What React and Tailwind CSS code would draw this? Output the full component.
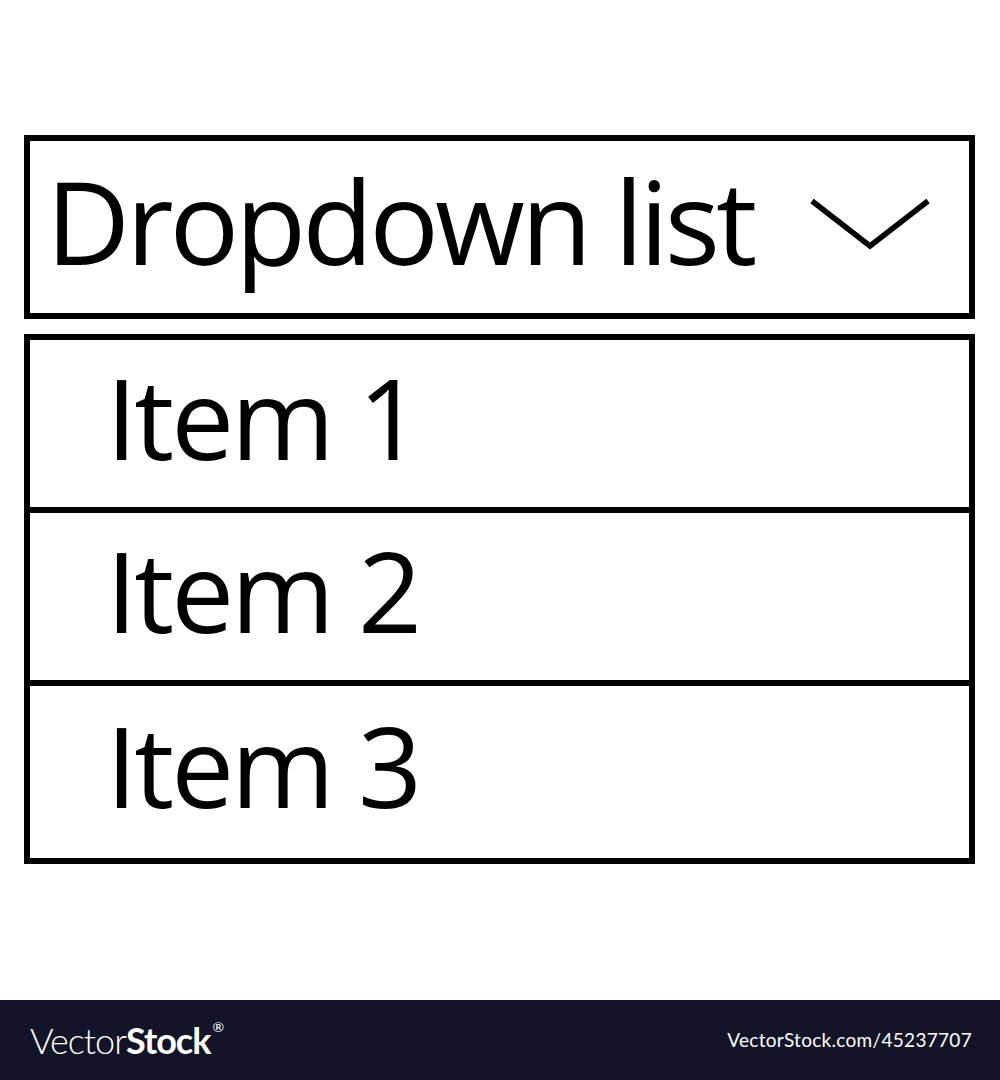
import React from 'react';

const items = ['Item 1', 'Item 2', 'Item 3'];

function Chevron() {
  return (
    <svg width="124" height="60" viewBox="0 0 124 60" className="shrink-0">
      <polyline
        points="4,4 62,49 120,4"
        fill="none"
        stroke="#000"
        strokeWidth="5.5"
      />
    </svg>
  );
}

function App() {
  return (
    <div className="h-[1080px] w-[1000px] flex flex-col bg-white font-['Open_Sans',sans-serif] text-black">
      <main className="flex-1 pt-[135px] px-[24px]">
        {/* Select header */}
        <div className="w-[951px] h-[184px] border-[6px] border-black flex items-center justify-between pl-[16px] pr-[37px]">
          <span className="text-[116px] leading-none tracking-[-4px] pb-[15px]">Dropdown list</span>
          <Chevron />
        </div>

        {/* Options */}
        <ul className="mt-[15px] w-[951px] border-[6px] border-black">
          {items.map((item, i) => (
            <li
              key={item}
              className={`flex items-center pl-[76px] ${i < items.length - 1 ? 'h-[173px] border-b-[6px] border-black' : 'h-[172px]'}`}
            >
              <span className="text-[112px] leading-none tracking-[-3px] pb-[14px]">{item}</span>
            </li>
          ))}
        </ul>
      </main>

      <footer className="h-[80px] bg-[#131427] flex items-center justify-between pl-[30px] pr-[28px] text-white">
        <div className="flex items-start font-['Lato',sans-serif] text-[36px] leading-none">
          <span className="font-light tracking-[-1px]">Vector</span>
          <span className="font-bold tracking-[-1px]">Stock</span>
          <span className="text-[14px] ml-[2px] mt-[-2px]">®</span>
        </div>
        <span className="font-['Lato',sans-serif] text-[19px] tracking-[0.3px]">VectorStock.com/45237707</span>
      </footer>
    </div>
  );
}

export default App;
